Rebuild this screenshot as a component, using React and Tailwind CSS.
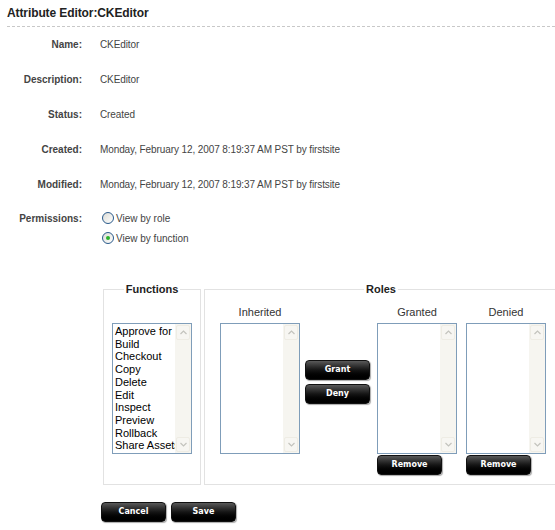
import React from "react";

const labelFont = { fontFamily: '"Liberation Sans", Arial, sans-serif' };

function Chevron({ up }) {
  return (
    <svg width="7" height="5" viewBox="0 0 7 5" className="block">
      <polyline
        points={up ? "0.5,4 3.5,1 6.5,4" : "0.5,1 3.5,4 6.5,1"}
        fill="none"
        stroke="#c3c3bd"
        strokeWidth="1.2"
      />
    </svg>
  );
}

function ScrollBtn({ up }) {
  return (
    <div className="flex h-[15px] w-[14px] items-center justify-center rounded-[2px] border border-[#eeece4] bg-[#f7f6f2]">
      <Chevron up={up} />
    </div>
  );
}

function ListBox({ items = [] }) {
  return (
    <div className="flex h-[131px] w-[80px] border border-[#7f9db9] bg-white">
      <div className="min-w-0 flex-1 overflow-hidden whitespace-nowrap pl-[2px] pt-[1px] text-[11px] leading-[12.7px] text-black" style={labelFont}>
        {items.map((it) => (
          <div key={it}>{it}</div>
        ))}
      </div>
      <div className="flex w-[16px] flex-col items-center bg-[#f6f5f0] py-[1px]">
        <ScrollBtn up />
        <div className="flex-1" />
        <ScrollBtn />
      </div>
    </div>
  );
}

function DarkButton({ children }) {
  return (
    <button
      type="button"
      className="flex h-[20px] w-[65px] items-center justify-center rounded-[4px] border border-[#111] bg-gradient-to-b from-[#5a5a5a] via-[#151515] to-[#000] text-[8px] font-bold text-white shadow-[1px_1px_1px_#aaa]"
      style={{ fontFamily: '"DejaVu Sans", Verdana, sans-serif' }}
    >
      {children}
    </button>
  );
}

function Radio({ checked, children }) {
  return (
    <div className="flex h-[20px] items-center gap-[2px]">
      <span className="flex h-[12px] w-[12px] items-center justify-center rounded-full border border-[#2a5a8a] bg-gradient-to-br from-[#dcdcd6] to-white">
        {checked && <span className="h-[4px] w-[4px] rounded-full bg-[#2bb32b]" />}
      </span>
      <span>{children}</span>
    </div>
  );
}

const rows = [
  ["Name:", "CKEditor"],
  ["Description:", "CKEditor"],
  ["Status:", "Created"],
  ["Created:", "Monday, February 12, 2007 8:19:37 AM PST by firstsite"],
  ["Modified:", "Monday, February 12, 2007 8:19:37 AM PST by firstsite"],
];

const functions = [
  "Approve for Publish",
  "Build",
  "Checkout",
  "Copy",
  "Delete",
  "Edit",
  "Inspect",
  "Preview",
  "Rollback",
  "Share Assets",
];

export default function App() {
  return (
    <div className="h-[530px] w-[555px] overflow-hidden bg-white pl-[7px] text-[#333]" style={labelFont}>
      <h1 className="pt-[5px] text-[12px] font-bold leading-[16px] tracking-[-0.1px] text-[#222]">Attribute Editor:CKEditor</h1>
      <div className="mt-[5px] border-t border-dashed border-[#c8c8c8]" />

      <div className="text-[11px]">
        {rows.map(([label, value]) => (
          <div key={label} className="flex h-[35px] items-center">
            <div className="w-[75px] text-right text-[10px] font-bold text-[#444]">{label}</div>
            <div className="pl-[18px] text-[10px] tracking-[-0.1px] text-[#444]">{value}</div>
          </div>
        ))}
        <div className="flex pt-[6px]">
          <div className="w-[75px] pt-[3px] text-right text-[10px] font-bold text-[#444]">Permissions:</div>
          <div className="pl-[20px] text-[10px] text-[#444]">
            <Radio>View by role</Radio>
            <Radio checked>View by function</Radio>
          </div>
        </div>
      </div>

      <div className="ml-[96px] mt-[34px] flex gap-[3px] text-[11px]">
        <fieldset className="h-[203px] w-[99px] border border-[#e2e2e2] px-[8px] pt-[27px]">
          <legend className="mx-auto px-[2px] font-bold leading-[14px] text-[#222]">Functions</legend>
          <ListBox items={functions} />
        </fieldset>

        <fieldset className="h-[203px] w-[354px] shrink-0 border border-[#e2e2e2] pt-[9px]">
          <legend className="mx-auto px-[2px] font-bold leading-[14px] text-[#222]">Roles</legend>
          <div className="ml-[15px] flex items-start">
            <div className="flex w-[80px] flex-col items-center">
              <div className="mb-[4px] leading-[14px] text-[#333]">Inherited</div>
              <ListBox />
            </div>
            <div className="ml-[5px] flex flex-col gap-[4px] pt-[55px]">
              <DarkButton>Grant</DarkButton>
              <DarkButton>Deny</DarkButton>
            </div>
            <div className="ml-[7px] flex w-[80px] flex-col items-center">
              <div className="mb-[4px] leading-[14px] text-[#333]">Granted</div>
              <ListBox />
              <div className="mt-[1px] self-start">
                <DarkButton>Remove</DarkButton>
              </div>
            </div>
            <div className="ml-[9px] flex w-[80px] flex-col items-center">
              <div className="mb-[4px] leading-[14px] text-[#333]">Denied</div>
              <ListBox />
              <div className="mt-[1px] self-start">
                <DarkButton>Remove</DarkButton>
              </div>
            </div>
          </div>
        </fieldset>
      </div>

      <div className="ml-[94px] mt-[17px] flex gap-[5px]">
        <DarkButton>Cancel</DarkButton>
        <DarkButton>Save</DarkButton>
      </div>
    </div>
  );
}
